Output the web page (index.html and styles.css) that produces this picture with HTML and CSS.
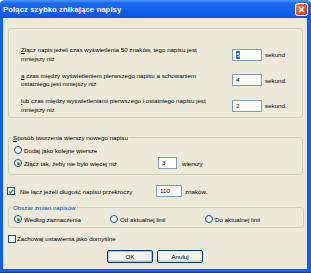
FILE: index.html
```html
<!DOCTYPE html>
<html lang="pl">
<head>
<meta charset="utf-8">
<title>Połącz szybko znikające napisy</title>
<link rel="stylesheet" href="styles.css">
</head>
<body>
<div class="window">
  <div class="titlebar">
    <span class="title">Połącz szybko znikające napisy</span>
    <svg class="close" width="13" height="13" viewBox="0 0 13 13">
      <defs>
        <linearGradient id="cg" x1="0" y1="0" x2="1" y2="1">
          <stop offset="0" stop-color="#f09a7c"/>
          <stop offset="0.45" stop-color="#e2582f"/>
          <stop offset="1" stop-color="#c23a16"/>
        </linearGradient>
      </defs>
      <rect x="0.5" y="0.5" width="12" height="12" rx="2" fill="url(#cg)" stroke="#ffffff"/>
      <path d="M4 4 L9 9 M9 4 L4 9" stroke="#ffffff" stroke-width="1.6"/>
    </svg>
  </div>
  <div class="frame">
    <div class="client">
      <div class="group g1">
        <div class="row">
          <div class="desc"><u>Z</u>łącz napis jeżeli czas wyświetlenia 50 znaków, tego napisu jest<br>mniejszy niż</div>
          <div class="field w30"><span class="sel">5</span></div>
          <span class="unit">sekund</span>
        </div>
        <div class="row">
          <div class="desc"><u>a</u> czas między wyświetleniem pierwszego napisu a schowaniem<br>ostatniego jest mniejszy niż</div>
          <div class="field w30">4</div>
          <span class="unit">sekund.</span>
        </div>
        <div class="row">
          <div class="desc"><u>l</u>ub czas między wyświetleniami pierwszego i ostatniego napisu jest<br>mniejszy niż</div>
          <div class="field w30">2</div>
          <span class="unit">sekund.</span>
        </div>
      </div>

      <fieldset class="box g2">
        <legend><u>S</u>posób tworzenia wierszy nowego napisu</legend>
        <div class="opt"><span class="radio"></span><span>Dodaj jako kolejne wiersze</span></div>
        <div class="opt">
          <span class="radio on"></span><span class="lbl2">Złącz tak, żeby nie było więcej niż</span>
          <div class="field w18">3</div>
          <span class="unit2">wierszy</span>
        </div>
      </fieldset>

      <div class="chk chk1">
        <span class="check on"><svg width="7" height="7" viewBox="0 0 7 7"><path d="M1 3.5 L2.8 5.3 L6 1.5" stroke="#21A121" stroke-width="1.5" fill="none"/></svg></span>
        <span class="lbl3">Nie łącz jeżeli długość napisu przekroczy</span>
        <div class="field w25">110</div>
        <span class="unit">znaków.</span>
      </div>

      <fieldset class="box g3">
        <legend>Obszar zmian napisów</legend>
        <div class="opts3">
          <div class="opt3"><span class="radio on"></span><span>Według zaznaczenia</span></div>
          <div class="opt3"><span class="radio"></span><span>Od aktualnej linii</span></div>
          <div class="opt3"><span class="radio"></span><span>Do aktualnej linii</span></div>
        </div>
      </fieldset>

      <div class="chk chk2">
        <span class="check"></span>
        <span>Zachowaj ustawienia jako domyślne</span>
      </div>

      <div class="buttons">
        <button class="btn def">OK</button>
        <button class="btn">Anuluj</button>
      </div>
    </div>
  </div>
</div>
</body>
</html>
```

FILE: styles.css
```css
html, body {
  margin: 0;
  padding: 0;
  background: #ffffff;
}

.window {
  width: 311px;
  height: 273px;
  display: flex;
  flex-direction: column;
  font-family: "Liberation Sans", Arial, sans-serif;
  font-size: 6.2px;
  color: #000;
  background-color: #1563f0;
  border-radius: 5px 5px 0 0;
}

.titlebar {
  height: 18px;
  flex: none;
  display: flex;
  align-items: center;
  justify-content: space-between;
  padding: 0 3px 0 3px;
  background-color: #1563f0;
  background-image: linear-gradient(to bottom, #4a9af9 0%, #1a68f2 18%, #1260ee 60%, #0a54e0 100%);
  border-radius: 5px 5px 0 0;
}

.title {
  color: #ffffff;
  font-weight: bold;
  font-size: 7.7px;
  letter-spacing: 0.1px;
}

.close { display: block; flex: none; }

.frame {
  flex: 1;
  display: flex;
  padding: 0 4px 4px 3px;
  background-color: #1060ee;
  box-shadow: inset 0 -1px 0 #0a3cb8;
}

.client {
  flex: 1;
  background: #ece9d8;
  display: flex;
  flex-direction: column;
  padding: 0 4px 0 5px;
}

u { text-decoration: underline; }

/* group 1 */
.group {
  margin-top: 10px;
  height: 90px;
  box-sizing: border-box;
  border: 1px solid #d0d0bf;
  border-radius: 3px;
  padding: 17px 0 0 12px;
  display: flex;
  flex-direction: column;
  gap: 8.5px;
}

.row {
  display: flex;
  align-items: center;
  height: 17px;
}

.desc {
  width: 211px;
  line-height: 8.5px;
}

.field {
  height: 12px;
  box-sizing: border-box;
  border: 1px solid #7f9db9;
  background: #fff;
  display: flex;
  align-items: center;
  padding-left: 3px;
  line-height: 8px;
}

.w30 { width: 30px; }
.w25 { width: 26px; }
.w18 { width: 19px; }

.sel {
  background: #316ac5;
  color: #fff;
  padding: 0 0.5px;
}

.unit { margin-left: 3px; }
.unit2 { margin-left: 5px; }

/* fieldset boxes */
.box {
  margin: 14.5px 0 0 0;
  padding: 0;
  border: 1px solid #d0d0bf;
  border-radius: 3px;
  min-width: 0;
}

.box legend {
  margin-left: 3px;
  padding: 0 1px;
  line-height: 9px;
}

.g3 legend { color: #0046d5; }

.g2 { padding-bottom: 4.5px; }

.opt {
  display: flex;
  align-items: center;
  height: 13px;
  padding-left: 5px;
}

.g2 .opt:first-of-type { margin-top: 2px; }

.radio {
  width: 8px;
  height: 8px;
  box-sizing: border-box;
  border: 1px solid #1c5180;
  border-radius: 50%;
  background-color: #f4f4f0;
  margin-right: 2px;
  flex: none;
  display: flex;
  align-items: center;
  justify-content: center;
}

.radio.on::after {
  content: "";
  width: 3px;
  height: 3px;
  border-radius: 50%;
  background: #21a121;
}

.lbl2 { width: 134px; }

/* checkbox rows */
.chk {
  display: flex;
  align-items: center;
}

.chk1 {
  margin-top: 10px;
  height: 12px;
}

.check {
  width: 8px;
  height: 8px;
  box-sizing: border-box;
  border: 1px solid #1c5180;
  background-color: #f4f4f0;
  flex: none;
  display: flex;
  align-items: center;
  justify-content: center;
}

.check svg { display: block; }

.chk1 .check { margin-left: -1px; margin-right: 5px; }
.lbl3 { width: 136px; }

.g3 {
  margin-top: 5.5px;
  padding-bottom: 3px;
  margin-right: -1px;
}

.opts3 {
  display: grid;
  grid-template-columns: 96px 95px auto;
  padding-left: 5px;
  margin-top: 2.5px;
  height: 10px;
  align-items: center;
}

.opt3 {
  display: flex;
  align-items: center;
}

.chk2 {
  margin-top: 6px;
  height: 9px;
}

.chk2 .check { margin-right: 1px; }

/* buttons */
.buttons {
  margin-top: 7px;
  display: flex;
  justify-content: center;
  gap: 4px;
  padding-right: 1px;
}

.btn {
  width: 46px;
  height: 13px;
  box-sizing: border-box;
  margin: 0;
  padding: 0;
  font-family: "Liberation Sans", Arial, sans-serif;
  font-size: 6.2px;
  color: #000;
  border: 1px solid #003c74;
  border-radius: 2px;
  background-color: #f2f2ee;
  box-shadow: inset 0 -2px 0 #dcd8cc;
}

.btn.def {
  box-shadow: inset 0 0 0 1px #a9c1ee, inset 0 -2px 0 #dcd8cc;
}
```
